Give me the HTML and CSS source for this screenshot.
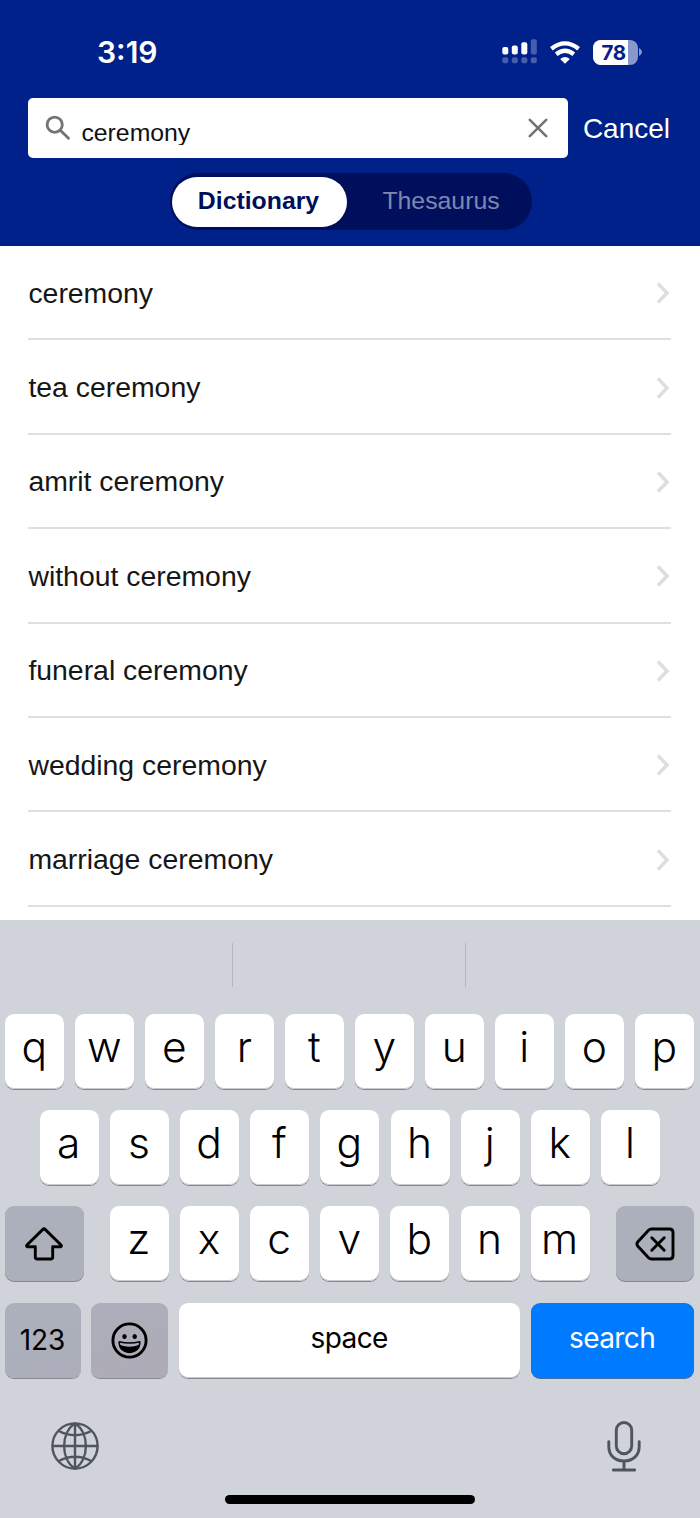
FILE: index.html
```html
<!DOCTYPE html>
<html lang="en">
<head>
<meta charset="utf-8">
<title>Dictionary search</title>
<link rel="stylesheet" href="styles.css">
</head>
<body>
<div class="screen">
  <header class="header">
    <div class="status">
      <div class="time">3:19</div>
      <div class="status-icons">
        <svg class="signal" width="36" height="26" viewBox="0 0 36 26" fill="#fff">
          <rect x="0.3" y="8" width="6" height="7.5" rx="2"/><rect x="9.8" y="6.4" width="6" height="9.1" rx="2"/><rect x="19.3" y="3.2" width="6" height="12.3" rx="2"/>
          <g opacity=".28"><rect x="28.8" y="0.3" width="6" height="15.2" rx="2"/><rect x="0.3" y="18.2" width="6" height="6" rx="2"/><rect x="9.8" y="18.2" width="6" height="6" rx="2"/><rect x="19.3" y="18.2" width="6" height="6" rx="2"/><rect x="28.8" y="18.2" width="6" height="6" rx="2"/></g>
        </svg>
        <svg class="wifi" width="30" height="23" viewBox="0 0 30 23" fill="none" stroke="#fff" stroke-width="4.3">
          <path d="M1.4 7.8 Q15 -3.1 28.6 7.8"/><path d="M6.2 13.2 Q15 6.3 23.8 13.2"/><path d="M10.2 18Q15 13.9 19.8 18L15 22.8Z" fill="#fff" stroke="none"/>
        </svg>
        <div class="battery"><span class="battery-level">78</span></div>
        <svg class="battery-cap" width="3" height="8" viewBox="0 0 3 8"><path d="M0 0Q3 1.3 3 4Q3 6.7 0 8Z" fill="#8a97cc"/></svg>
      </div>
    </div>
    <div class="search-row">
      <div class="search-box">
        <svg class="magnifier" width="26" height="26" viewBox="0 0 26 26" fill="none" stroke="#737373" stroke-width="2.8" stroke-linecap="round"><circle cx="9.7" cy="9.7" r="7.6"/><path d="M15.5 15.5 23.5 23.3"/></svg>
        <span class="query">ceremony</span>
        <svg class="clear" width="20" height="20" viewBox="0 0 20 20" stroke="#737373" stroke-width="2.6" stroke-linecap="round"><path d="M1.8 1.8 18.2 18.2M18.2 1.8 1.8 18.2"/></svg>
      </div>
      <span class="cancel">Cancel</span>
    </div>
    <div class="tabs"><span class="tab tab-active">Dictionary</span><span class="tab">Thesaurus</span></div>
  </header>
  <main class="results">
    <div class="result"><span>ceremony</span><svg class="chevron" viewBox="0 0 14 22"><path d="M2 1.6 11 11 2 20.4"/></svg></div>
    <div class="result"><span>tea ceremony</span><svg class="chevron" viewBox="0 0 14 22"><path d="M2 1.6 11 11 2 20.4"/></svg></div>
    <div class="result"><span>amrit ceremony</span><svg class="chevron" viewBox="0 0 14 22"><path d="M2 1.6 11 11 2 20.4"/></svg></div>
    <div class="result"><span>without ceremony</span><svg class="chevron" viewBox="0 0 14 22"><path d="M2 1.6 11 11 2 20.4"/></svg></div>
    <div class="result"><span>funeral ceremony</span><svg class="chevron" viewBox="0 0 14 22"><path d="M2 1.6 11 11 2 20.4"/></svg></div>
    <div class="result"><span>wedding ceremony</span><svg class="chevron" viewBox="0 0 14 22"><path d="M2 1.6 11 11 2 20.4"/></svg></div>
    <div class="result"><span>marriage ceremony</span><svg class="chevron" viewBox="0 0 14 22"><path d="M2 1.6 11 11 2 20.4"/></svg></div>
  </main>
  <section class="keyboard">
    <div class="suggestions"><span></span><span></span><span></span></div>
    <div class="keys">
      <div class="key-row">
        <span class="key">q</span><span class="key">w</span><span class="key">e</span><span class="key">r</span><span class="key">t</span><span class="key">y</span><span class="key">u</span><span class="key">i</span><span class="key">o</span><span class="key">p</span>
      </div>
      <div class="key-row key-row-middle">
        <span class="key">a</span><span class="key">s</span><span class="key">d</span><span class="key">f</span><span class="key">g</span><span class="key">h</span><span class="key">j</span><span class="key">k</span><span class="key">l</span>
      </div>
      <div class="key-row key-row-lower">
        <span class="key key-gray">
          <svg width="38" height="34" viewBox="0 0 38 34" fill="none" stroke="#000" stroke-width="2.9" stroke-linejoin="round"><path d="M17.9 2.4Q19 1.3 20.1 2.4L35.8 17.7Q37.2 19.4 35.4 19.8H27.7V30Q27.7 32 25.7 32H12.3Q10.3 32 10.3 30V19.8H2.6Q.8 19.4 2.2 17.7Z"/></svg>
        </span>
        <div class="letters"><span class="key">z</span><span class="key">x</span><span class="key">c</span><span class="key">v</span><span class="key">b</span><span class="key">n</span><span class="key">m</span></div>
        <span class="key key-gray">
          <svg width="40" height="34" viewBox="0 0 40 34" fill="none" stroke="#000" stroke-width="2.9" stroke-linecap="round" stroke-linejoin="round"><path d="M16.5 2H34.5Q38 2 38 5.5V28.5Q38 32 34.5 32H16.5Q14.8 32 13.5 30.8L2.9 19.2Q1 17 2.9 14.8L13.5 3.2Q14.8 2 16.5 2Z"/><path d="M16.8 10.7 29.2 23.3M29.2 10.7 16.8 23.3"/></svg>
        </span>
      </div>
      <div class="key-row key-row-bottom">
        <span class="key key-gray key-tint key-numbers">123</span>
        <span class="key key-gray key-tint key-warm">
          <svg width="37" height="37" viewBox="0 0 37 37"><circle cx="18.5" cy="18.5" r="16.6" fill="none" stroke="#000" stroke-width="2.9"/><ellipse cx="13.5" cy="14.4" rx="2.2" ry="2.5"/><ellipse cx="23.7" cy="14.4" rx="2.2" ry="2.5"/><path d="M8.2 19.7Q18.5 22.2 28.8 19.7C29.2 34 7.8 34 8.2 19.7Z" fill="none" stroke="#000" stroke-width="1.6" stroke-linejoin="round"/><path d="M8.6 22.7Q18.5 26.8 28.4 22.7C27 33.4 10 33.4 8.6 22.7Z"/></svg>
        </span>
        <span class="key key-word">space</span>
        <span class="key key-word key-search">search</span>
      </div>
    </div>
    <div class="dock">
      <svg width="48" height="48" viewBox="0 0 48 48" fill="none" stroke="#50555c" stroke-width="2.4"><circle cx="24" cy="24" r="22.6"/><path d="M24 1.2V46.8M1.2 24H46.8M24 1.2C9.5 10.5 9.5 37.5 24 46.8C38.5 37.5 38.5 10.5 24 1.2M7.8 9Q24 17.5 40.2 9M7.8 39Q24 30.5 40.2 39"/></svg>
      <svg width="34" height="51" viewBox="0 0 34 51" fill="none" stroke="#50555c" stroke-width="2.9" stroke-linecap="round"><rect x="9.3" y="1.5" width="15.4" height="31.3" rx="7.7"/><path d="M1.8 20.8V25.5C1.8 34.5 8 40 17 40C26 40 32.2 34.5 32.2 25.5V20.8M17 40V49M6.3 49H27.7"/></svg>
    </div>
    <div class="home-indicator"></div>
  </section>
</div>
</body>
</html>
```
FILE: styles.css
```css
* { box-sizing: border-box; }

body {
  margin: 0;
  background: #fff;
  font-family: "Liberation Sans", Arial, sans-serif;
}

svg { display: block; flex: none; }

.screen {
  width: 700px;
  height: 1518px;
  display: flex;
  flex-direction: column;
  overflow: hidden;
}

.header {
  height: 246px;
  flex: none;
  background: #002189;
  display: flex;
  flex-direction: column;
}

.status {
  height: 98px;
  padding: 34px 58px 0 97px;
  display: flex;
  justify-content: space-between;
  align-items: flex-start;
  color: #fff;
  font-family: Inter, sans-serif;
}

.time { font-size: 30px; line-height: 36px; font-weight: 600; }

.status-icons { display: flex; align-items: center; height: 36px; }
.wifi { margin: 0 13px 0 12px; }

.battery {
  width: 45px;
  height: 25px;
  border-radius: 8px;
  background: #8a97cc;
  overflow: hidden;
}

.battery-level {
  display: block;
  width: 35px;
  height: 25px;
  padding-left: 8.5px;
  background: #fff;
  color: #002189;
  font-size: 20.5px;
  line-height: 25px;
  font-weight: 700;
  letter-spacing: -.3px;
}

.battery-cap { margin-left: 1px; }

.search-row {
  display: flex;
  align-items: center;
  height: 60px;
  padding-left: 28.4px;
}

.search-box {
  width: 539.5px;
  height: 60.5px;
  padding: 0 20px 0 17px;
  display: flex;
  align-items: center;
  border-radius: 5px;
  background: #fff;
}

.query {
  flex: 1;
  height: 29px;
  margin: 4px 0 0 10px;
  overflow: hidden;
  color: #111;
  font-size: 24.8px;
  line-height: 33px;
}

.cancel { margin: 2px 0 0 15px; color: #fff; font-size: 28px; }

.tabs {
  width: 362px;
  height: 57px;
  margin: 15px 0 0 170px;
  padding: 3.5px 2px;
  display: flex;
  border-radius: 29px;
  background: #000f5c;
}

.tab {
  flex: 1;
  padding: 0 0 2px 5px;
  display: flex;
  align-items: center;
  justify-content: center;
  border-radius: 25px;
  color: #7f87ae;
  font-size: 24.8px;
}

.tab-active {
  flex: none;
  width: 175px;
  padding: 0 2px 2px 0;
  background: #fff;
  color: #000f5c;
  font-weight: 700;
}

.results { height: 673.5px; flex: none; padding: 0 28.8px 0 28.4px; }

.result {
  height: 94.4px;
  padding: 2px 1px 0 0;
  display: flex;
  align-items: center;
  justify-content: space-between;
  border-bottom: 2px solid #e0e0e0;
  color: #161616;
  font-size: 28.4px;
}

.chevron {
  width: 14px;
  height: 22px;
  fill: none;
  stroke: #dedede;
  stroke-width: 3.6;
}

.keyboard {
  flex: 1;
  display: flex;
  flex-direction: column;
  background: #d0d3d9;
  font-family: Inter, sans-serif;
}

.suggestions {
  height: 94.5px;
  padding: 23px 0 27.5px;
  display: grid;
  grid-template-columns: 233px 233px 234px;
}

.suggestions span + span { box-shadow: -1px 0 0 #b4b7bd; }

.keys { display: grid; row-gap: 21.2px; padding: 0 5.3px; }

.key-row { display: grid; grid-template-columns: repeat(10, 59px); column-gap: 11px; }
.key-row-middle { grid-template-columns: repeat(9, 59px); column-gap: 11.15px; padding-left: 34.5px; }
.key-row-lower { grid-template-columns: 78.5px 480px 78.5px; column-gap: 26px; }
.key-row-bottom { grid-template-columns: 75.5px 77px 341px 163.5px; column-gap: 10.7px; }

.letters { display: grid; grid-template-columns: repeat(7, 59px); column-gap: 11.15px; }

.key {
  height: 75px;
  padding: 0 1px 10px 0;
  display: flex;
  align-items: center;
  justify-content: center;
  border-radius: 9px;
  background: #fff;
  box-shadow: inset 0 -1px 0 #c9cacc, 0 1px 0 #858890;
  color: #000;
  font-size: 42.5px;
  font-weight: 350;
}

.key-gray {
  padding-bottom: 0;
  background: #abb0bb;
  box-shadow: 0 1px 0 #858890;
}

.key-tint { background: linear-gradient(160deg, #abb1bc, #acaeba); }
.key-warm { background: linear-gradient(160deg, #abafbb, #aeabb6); }
.key-numbers { font-size: 28px; font-weight: 400; }
.key-word { padding-bottom: 4px; font-size: 28px; font-weight: 400; letter-spacing: -.6px; }
.key-search { background: #007aff; color: #fff; box-shadow: 0 1px 0 #4c6d99; }

.dock {
  margin-top: 42.5px;
  padding: 0 59px 0 51px;
  height: 52px;
  display: flex;
  justify-content: space-between;
  align-items: center;
}

.home-indicator {
  width: 250px;
  height: 9px;
  margin: 22.5px 0 0 225.3px;
  border-radius: 5px;
  background: #000;
}
```
